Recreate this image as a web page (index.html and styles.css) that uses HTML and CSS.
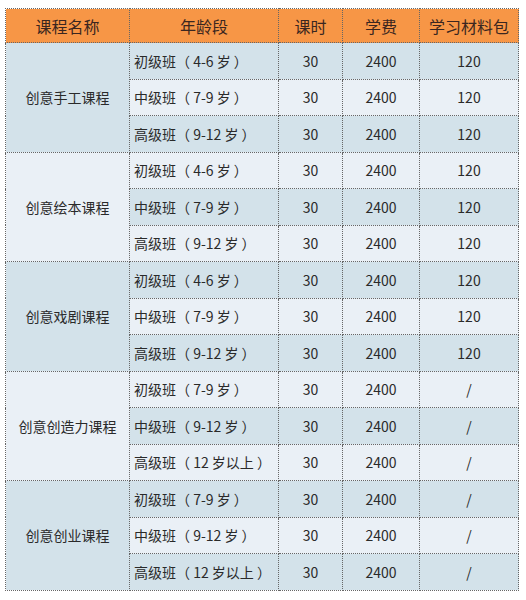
FILE: index.html
```html
<!DOCTYPE html>
<html lang="zh">
<head>
<meta charset="utf-8">
<link rel="stylesheet" href="styles.css">
</head>
<body>
<table class="fees">
  <colgroup>
    <col class="c1"><col class="c2"><col class="c3"><col class="c4"><col class="c5">
  </colgroup>
  <thead>
    <tr><th>课程名称</th><th>年龄段</th><th>课时</th><th>学费</th><th>学习材料包</th></tr>
  </thead>
  <tbody>
    <tr class="d"><td class="name d" rowspan="3">创意手工课程</td><td class="age">初级班（ 4-6 岁 ）</td><td>30</td><td>2400</td><td>120</td></tr>
    <tr class="l"><td class="age">中级班（ 7-9 岁 ）</td><td>30</td><td>2400</td><td>120</td></tr>
    <tr class="d"><td class="age">高级班（ 9-12 岁 ）</td><td>30</td><td>2400</td><td>120</td></tr>

    <tr class="l"><td class="name l" rowspan="3">创意绘本课程</td><td class="age">初级班（ 4-6 岁 ）</td><td>30</td><td>2400</td><td>120</td></tr>
    <tr class="d"><td class="age">中级班（ 7-9 岁 ）</td><td>30</td><td>2400</td><td>120</td></tr>
    <tr class="l"><td class="age">高级班（ 9-12 岁 ）</td><td>30</td><td>2400</td><td>120</td></tr>

    <tr class="d"><td class="name d" rowspan="3">创意戏剧课程</td><td class="age">初级班（ 4-6 岁 ）</td><td>30</td><td>2400</td><td>120</td></tr>
    <tr class="l"><td class="age">中级班（ 7-9 岁 ）</td><td>30</td><td>2400</td><td>120</td></tr>
    <tr class="d"><td class="age">高级班（ 9-12 岁 ）</td><td>30</td><td>2400</td><td>120</td></tr>

    <tr class="l"><td class="name l" rowspan="3">创意创造力课程</td><td class="age">初级班（ 7-9 岁 ）</td><td>30</td><td>2400</td><td>/</td></tr>
    <tr class="d"><td class="age">中级班（ 9-12 岁 ）</td><td>30</td><td>2400</td><td>/</td></tr>
    <tr class="l"><td class="age">高级班（ 12 岁以上 ）</td><td>30</td><td>2400</td><td>/</td></tr>

    <tr class="d"><td class="name d" rowspan="3">创意创业课程</td><td class="age">初级班（ 7-9 岁 ）</td><td>30</td><td>2400</td><td>/</td></tr>
    <tr class="l"><td class="age">中级班（ 9-12 岁 ）</td><td>30</td><td>2400</td><td>/</td></tr>
    <tr class="d"><td class="age">高级班（ 12 岁以上 ）</td><td>30</td><td>2400</td><td>/</td></tr>
  </tbody>
</table>
</body>
</html>
```

FILE: styles.css
```css
html, body {
  margin: 0;
  background: #ffffff;
}
body {
  padding: 8px 8px 0 5px;
  font-family: "Noto Sans CJK SC", "Noto Sans", sans-serif;
  color: #2a2a2a;
}
.fees {
  border-collapse: collapse;
  table-layout: fixed;
  width: 513px;
  border: 1px dotted #555;
}
.c1 { width: 124px; }
.c2 { width: 149px; }
.c3 { width: 64px; }
.c4 { width: 77px; }
.c5 { width: 99px; }
.fees th {
  background: #f79646;
  height: 33px;
  padding: 0;
  font-size: 16px;
  font-weight: normal;
  color: #3a2620;
  border: 1px dotted #666;
  text-align: center;
}
.fees td {
  height: 35.5px;
  padding: 0;
  font-size: 14px;
  text-align: center;
  border: 1px dotted #666;
}
.fees tr.d td { background: #d3e2ea; }
.fees tr.l td { background: #eaf0f6; }
.fees td.name.d { background: #d3e2ea; }
.fees td.name.l { background: #eaf0f6; }
.fees td.age {
  text-align: left;
  padding-left: 4px;
  white-space: nowrap;
}
```
